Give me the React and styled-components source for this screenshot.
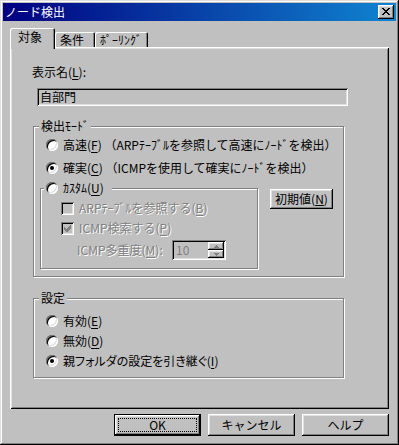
import React from 'react'
import styled, { createGlobalStyle } from 'styled-components'

const GlobalStyle = createGlobalStyle`
  html, body { margin:0; padding:0; background:#c0c0c0; }
  body {
    font-family:"Noto Sans CJK JP","Liberation Sans",sans-serif;
    font-size:12px;
    line-height:14px;
    color:#000;
  }
  * { box-sizing:border-box; }
`

const raised = `box-shadow: inset -1px -1px #000, inset 1px 1px #fff, inset -2px -2px #808080, inset 2px 2px #dfdfdf;`
const sunken = `box-shadow: inset 1px 1px #808080, inset -1px -1px #fff, inset 2px 2px #000, inset -2px -2px #dfdfdf;`

const Window = styled.div`
  width:399px;
  height:445px;
  padding:3px;
  background:#c0c0c0;
  box-shadow: inset -1px -1px #000, inset 1px 1px #dfdfdf, inset -2px -2px #808080, inset 2px 2px #fff;
  display:flex;
  flex-direction:column;
`
const TitleBar = styled.div`
  height:18px;
  display:flex;
  align-items:center;
  padding:0 2px 0 2px;
  background:linear-gradient(to right, #000080, #1084d0);
  color:#fff;
`
const CloseButton = styled.span`
  margin-left:auto;
  width:16px;
  height:14px;
  background:#c0c0c0;
  ${raised}
  display:flex;
  align-items:center;
  justify-content:center;
  padding:0 1px 1px 0;
`
const Body = styled.div`
  flex:1;
  padding:7px 7px 0 7px;
  display:flex;
  flex-direction:column;
`
const TabRow = styled.div`
  height:19px;
  display:flex;
  align-items:flex-end;
`
const Tab = styled.div`
  width:${p => p.w}px;
  height:${p => (p.active ? 21 : 15)}px;
  margin-bottom:${p => (p.active ? -2 : 0)}px;
  padding:${p => (p.active ? '2px 0 0 8px' : '1px 0 0 5px')};
  background:#c0c0c0;
  border-radius:2px 2px 0 0;
  box-shadow: inset 1px 1px #fff, inset -1px 0 #000, inset -2px 0 #808080;
  position:relative;
  z-index:${p => (p.active ? 1 : 0)};
  white-space:nowrap;
`
const Panel = styled.div`
  height:362px;
  background:#c0c0c0;
  box-shadow: inset 1px 1px #fff, inset -1px -1px #000, inset 2px 2px #dfdfdf, inset -2px -2px #808080;
  padding:18px 0 0 22px;
  display:flex;
  flex-direction:column;
  align-items:flex-start;
`
const Label = styled.span`
  white-space:nowrap;
  color:${p => (p.disabled ? '#808080' : '#000')};
  text-shadow:${p => (p.disabled ? '1px 1px 0 #fff' : 'none')};
  font-feature-settings:${p => (p.tight ? '"palt"' : 'normal')};
  u { text-decoration-thickness:1px; text-underline-offset:2px; }
`
const TextBox = styled.div`
  margin:9px 0 0 5px;
  width:311px;
  height:18px;
  padding:2px 0 0 3px;
  background:#c0c0c0;
  ${sunken}
`
const Group = styled.fieldset`
  margin:${p => p.m};
  padding:0;
  width:${p => p.w}px;
  min-width:0;
  border:1px solid #808080;
  box-shadow: inset 1px 1px #fff, 1px 1px #fff;
`
const Legend = styled.legend`
  margin-left:${p => p.ml}px;
  padding:0 ${p => p.pr}px 0 2px;
  height:14px;
  line-height:14px;
  display:flex;
  align-items:center;
  white-space:nowrap;
  background:#c0c0c0;
`
const GroupBody = styled.div`
  display:flex;
  flex-direction:column;
  align-items:flex-start;
  padding:${p => p.pad};
`
const Row = styled.div`
  height:${p => p.h || 20}px;
  margin-top:${p => p.mt || 0}px;
  margin-left:${p => p.ml || 0}px;
  display:flex;
  align-items:center;
`
const Radio = styled.span`
  width:12px;
  height:12px;
  flex:none;
  margin-right:5px;
  border-radius:50%;
  background:#fff;
  box-shadow: inset 1px 1px #808080, inset -1px -1px #fff, inset 2px 2px #000, inset -2px -2px #dfdfdf;
  display:flex;
  align-items:center;
  justify-content:center;
  &::after {
    content:'';
    display:${p => (p.checked ? 'block' : 'none')};
    width:4px;
    height:4px;
    border-radius:50%;
    background:#000;
  }
`
const Check = styled.span`
  width:13px;
  height:13px;
  flex:none;
  margin-right:5px;
  background:#c0c0c0;
  ${sunken}
  display:flex;
  align-items:center;
  justify-content:center;
`
const FieldLabel = styled(Label)`
  display:inline-block;
  width:95px;
`
const SpinBox = styled.div`
  width:54px;
  height:20px;
  background:#c0c0c0;
  ${sunken}
  display:flex;
  align-items:stretch;
  padding:2px;
`
const SpinValue = styled.span`
  flex:1;
  padding:1px 0 0 2px;
  color:#808080;
`
const SpinButtons = styled.div`
  width:16px;
  display:flex;
  flex-direction:column;
`
const SpinButton = styled.span`
  flex:1;
  background:#c0c0c0;
  ${raised}
  display:flex;
  align-items:center;
  justify-content:center;
`
const CustomRow = styled.div`
  display:flex;
  align-items:flex-start;
  margin-top:3px;
`
const Button = styled.div`
  width:${p => p.w}px;
  height:${p => p.h}px;
  margin:${p => p.m || 0};
  background:#c0c0c0;
  ${p => (p.isDefault
    ? 'border:1px solid #000; box-shadow: inset -1px -1px #000, inset 1px 1px #fff, inset -2px -2px #808080, inset 2px 2px #dfdfdf;'
    : raised)}
  display:flex;
  align-items:center;
  justify-content:center;
  white-space:nowrap;
  padding:${p => (p.isDefault ? '3px' : '0 0 1px 0')};
`
const FocusRing = styled.span`
  flex:1;
  align-self:stretch;
  border:1px dotted #000;
  display:flex;
  align-items:center;
  justify-content:center;
`
const ButtonRow = styled.div`
  margin-top:5px;
  display:flex;
  justify-content:flex-end;
  gap:7px;
`

const CloseIcon = () => {
  const rows = ['11000011', '01100110', '00111100', '00011000', '00111100', '01100110', '11000011']
  return (
    <svg width="8" height="7" viewBox="0 0 8 7" shapeRendering="crispEdges">
      {rows.map((r, y) => r.split('').map((c, x) => (c === '1' ? <rect key={`${x}-${y}`} x={x} y={y} width="1" height="1" fill="#000" /> : null)))}
    </svg>
  )
}

const CheckMark = () => (
  <svg width="7" height="7" viewBox="0 0 7 7" shapeRendering="crispEdges">
    <path d="M0 2 L2 4 L6 0 L7 0 L7 3 L3 7 L2 7 L0 5 Z" fill="#808080" />
  </svg>
)

const Arrow = ({ up }) => (
  <svg width="5" height="3" viewBox="0 0 5 3" shapeRendering="crispEdges">
    <path d={up ? 'M2 0 L3 0 L5 3 L0 3 Z' : 'M0 0 L5 0 L3 3 L2 3 Z'} fill="#808080" />
  </svg>
)

export default function App() {
  return (
    <>
      <GlobalStyle />
      <Window>
        <TitleBar>
          <span>ノード検出</span>
          <CloseButton><CloseIcon /></CloseButton>
        </TitleBar>
        <Body>
          <TabRow>
            <Tab active w={45}>対象</Tab>
            <Tab w={40}>条件</Tab>
            <Tab w={53}>ﾎﾟｰﾘﾝｸﾞ</Tab>
          </TabRow>
          <Panel>
            <Label>表示名(<u>L</u>):</Label>
            <TextBox>自部門</TextBox>

            <Group w={311} m="13px 0 0 1px">
              <Legend ml={5} pr={2}>検出ﾓｰﾄﾞ</Legend>
              <GroupBody pad="2px 0 7px 6px">
                <Row ml={6}>
                  <Radio />
                  <Label>高速(<u>F</u>) （ARPﾃｰﾌﾞﾙを参照して高速にﾉｰﾄﾞを検出）</Label>
                </Row>
                <Row ml={6} mt={3}>
                  <Radio checked />
                  <Label>確実(<u>C</u>) （ICMPを使用して確実にﾉｰﾄﾞを検出）</Label>
                </Row>
                <CustomRow>
                  <Group w={218} m="0">
                    <Legend ml={3} pr={8}>
                      <Radio />
                      <Label>ｶｽﾀﾑ(<u>U</u>)</Label>
                    </Legend>
                    <GroupBody pad="4px 0 8px 20px">
                      <Row h={18}>
                        <Check />
                        <Label disabled>ARPﾃｰﾌﾞﾙを参照する(<u>B</u>)</Label>
                      </Row>
                      <Row h={18} mt={2}>
                        <Check><CheckMark /></Check>
                        <Label disabled>ICMP検索する(<u>P</u>)</Label>
                      </Row>
                      <Row h={20} mt={3} ml={16}>
                        <FieldLabel disabled>ICMP多重度(<u>M</u>):</FieldLabel>
                        <SpinBox>
                          <SpinValue>10</SpinValue>
                          <SpinButtons>
                            <SpinButton><Arrow up /></SpinButton>
                            <SpinButton><Arrow /></SpinButton>
                          </SpinButtons>
                        </SpinBox>
                      </Row>
                    </GroupBody>
                  </Group>
                  <Button w={63} h={20} m="8px 0 0 12px">初期値(<u>N</u>)</Button>
                </CustomRow>
              </GroupBody>
            </Group>

            <Group w={311} m="14px 0 0 1px">
              <Legend ml={5} pr={2}>設定</Legend>
              <GroupBody pad="6px 0 6px 12px">
                <Row>
                  <Radio />
                  <Label>有効(<u>E</u>)</Label>
                </Row>
                <Row>
                  <Radio />
                  <Label>無効(<u>D</u>)</Label>
                </Row>
                <Row>
                  <Radio checked />
                  <Label tight>親フォルダの設定を引き継ぐ(<u>I</u>)</Label>
                </Row>
              </GroupBody>
            </Group>
          </Panel>
          <ButtonRow>
            <Button isDefault w={87} h={22}><FocusRing>OK</FocusRing></Button>
            <Button w={87} h={22}>キャンセル</Button>
            <Button w={87} h={22}>ヘルプ</Button>
          </ButtonRow>
        </Body>
      </Window>
    </>
  )
}
